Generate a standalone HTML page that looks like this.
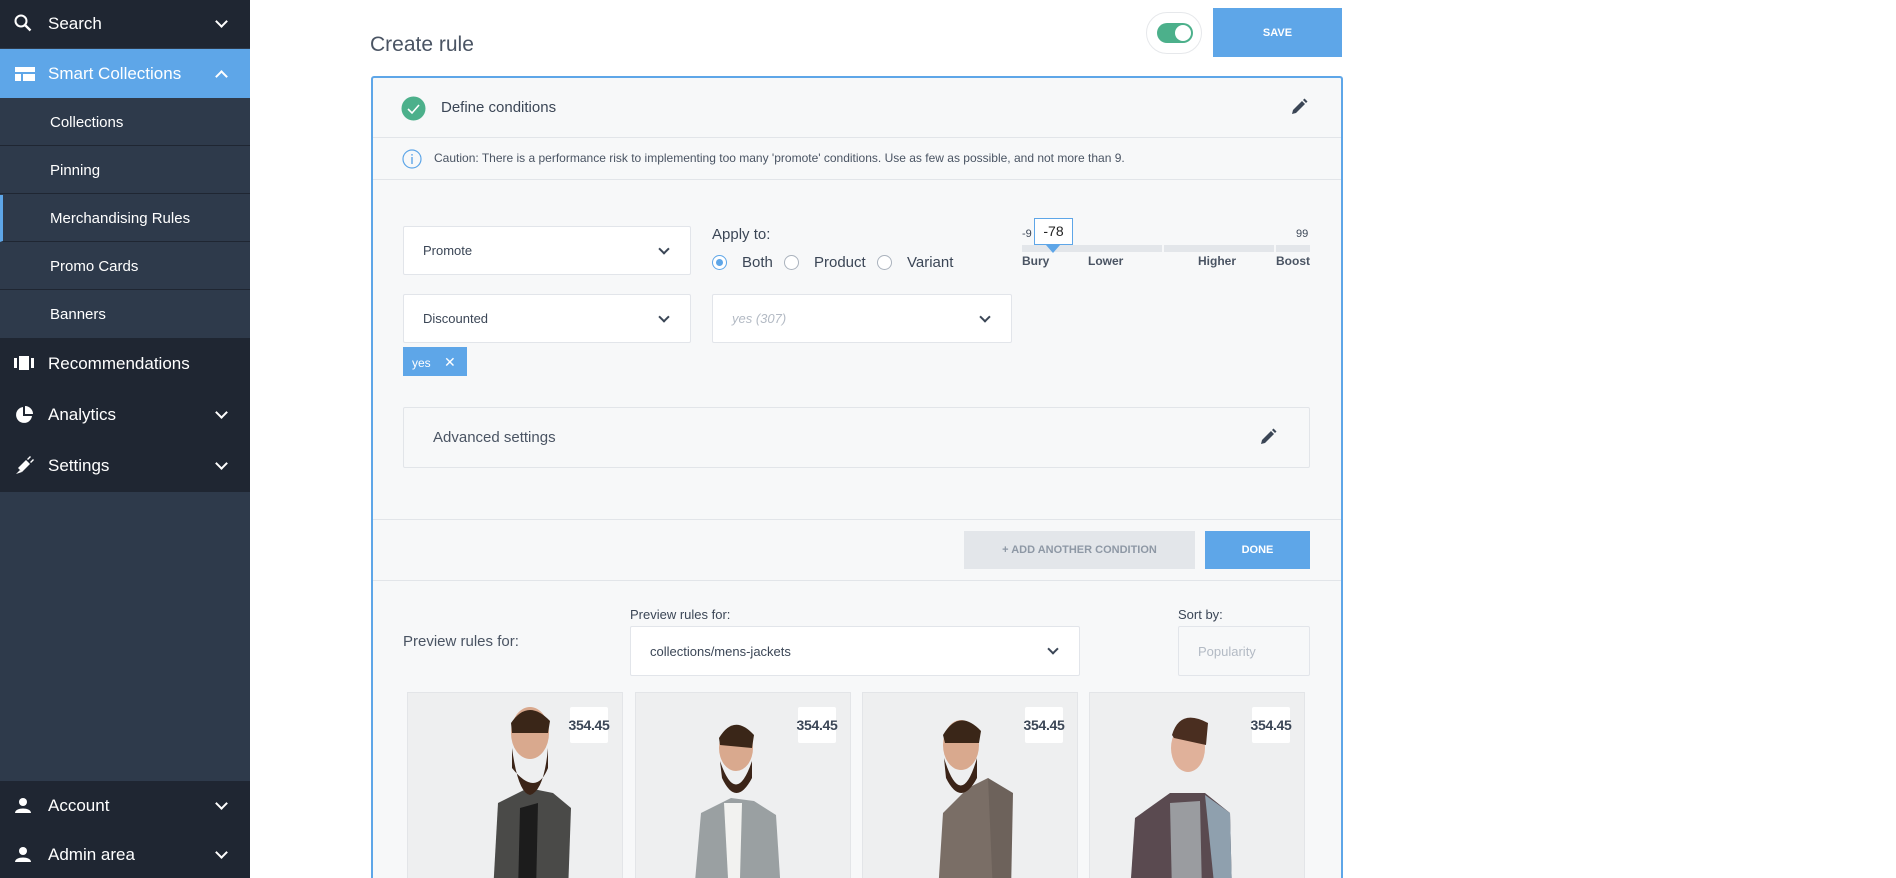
<!DOCTYPE html>
<html style="width:1896px;height:878px;overflow:hidden"><head><meta charset="utf-8">
<style>
*{box-sizing:border-box;margin:0;padding:0}
body{width:1896px;height:878px;overflow:hidden;background:#fff;font-family:"Liberation Sans",sans-serif;position:relative;color:#3b4656}
.abs{position:absolute}
#side{position:absolute;left:0;top:0;width:250px;height:878px;background:#2e3a4b}
.top{position:absolute;left:0;width:250px;background:#1f2632;color:#fff;font-size:17px;display:flex;align-items:center}
.top .t{position:absolute;left:48px}
.chev{position:absolute;right:24px;width:9px;height:9px;border-right:2px solid #fff;border-bottom:2px solid #fff;transform:rotate(45deg);margin-top:-5px}
.chev.up{transform:rotate(-135deg);margin-top:5px}
.sub{position:absolute;left:0;width:250px;height:47px;background:#2e3a4b;border-bottom:1px solid #1f2632;color:#fff;font-size:15px;display:flex;align-items:center;padding-left:50px}
.lbl{font-size:13px;color:#3b4656}
.sel{position:absolute;background:#fff;border:1px solid #e2e5ea;border-radius:2px;font-size:13px;color:#3b4656;display:flex;align-items:center;padding-left:19px}
.sel .c{position:absolute;right:22px;top:50%;width:8px;height:8px;border-right:2px solid #3b4656;border-bottom:2px solid #3b4656;transform:rotate(45deg);margin-top:-6px}
.radio{position:absolute;width:15px;height:15px;border:1px solid #aab2bd;border-radius:50%;background:#fff}
.card{position:absolute;top:692px;width:216px;height:186px;background:#eeeff0;border:1px solid #e3e5e8;border-bottom:none;overflow:hidden}
.price{position:absolute;top:14px;right:14px;width:38px;height:36px;background:#fff;border-radius:2px;font-size:14px;font-weight:bold;color:#3b4656;display:flex;align-items:center;justify-content:center;letter-spacing:-.3px}
</style></head><body>
<div id="side">
 <div class="top" style="top:0;height:48px"><svg class="abs" style="left:14px;top:14px" width="18" height="18" viewBox="0 0 18 18"><circle cx="7" cy="7" r="5.5" fill="none" stroke="#fff" stroke-width="2"/><line x1="11" y1="11" x2="16.5" y2="16.5" stroke="#fff" stroke-width="2.4"/></svg><span class="t">Search</span><span class="chev"></span></div>
 <div class="top" style="top:49px;height:49px;background:#5ea6e8"><svg class="abs" style="left:15px;top:18px" width="20" height="14"><rect x="0" y="0" width="20" height="5" fill="#fff"/><rect x="0" y="7" width="6" height="7" fill="#fff"/><rect x="8" y="7" width="12" height="7" fill="#fff"/></svg><span class="t">Smart Collections</span><span class="chev up"></span></div>
 <div class="sub" style="top:99px">Collections</div>
 <div class="sub" style="top:147px">Pinning</div>
 <div class="sub" style="top:195px;border-left:3px solid #5ea6e8;padding-left:47px">Merchandising Rules</div>
 <div class="sub" style="top:243px">Promo Cards</div>
 <div class="sub" style="top:291px;height:47px;border-bottom:none">Banners</div>
 <div class="top" style="top:338px;height:154px"></div>
 <div class="top" style="top:338px;height:51px"><svg class="abs" style="left:14px;top:18px" width="20" height="14"><rect x="0" y="2" width="3" height="10" fill="#fff"/><rect x="5" y="0" width="10" height="14" fill="#fff"/><rect x="17" y="2" width="3" height="10" fill="#fff"/></svg><span class="t">Recommendations</span></div>
 <div class="top" style="top:389px;height:51px"><svg class="abs" style="left:15px;top:17px" width="18" height="18" viewBox="0 0 18 18"><path d="M8 1A8 8 0 1 0 17 10H8Z" fill="#fff"/><path d="M10 0A8 8 0 0 1 18 8H10Z" fill="#fff"/></svg><span class="t">Analytics</span><span class="chev"></span></div>
 <div class="top" style="top:440px;height:52px"><svg class="abs" style="left:14px;top:16px" width="20" height="20" viewBox="0 0 20 20"><path d="M4 12L12 4L16 8L8 16Z" fill="#fff"/><path d="M2 18L6 14L8 16Z" fill="#fff"/><path d="M13 3L16 0L17 1L14 4Z M16 6L19 3L20 4L17 7Z" fill="#fff"/></svg><span class="t">Settings</span><span class="chev"></span></div>
 <div class="top" style="top:781px;height:50px"><svg class="abs" style="left:15px;top:16px" width="16" height="16"><circle cx="8" cy="5" r="4" fill="#fff"/><path d="M0 16C0 10 16 10 16 16Z" fill="#fff"/></svg><span class="t">Account</span><span class="chev"></span></div>
 <div class="top" style="top:831px;height:47px"><svg class="abs" style="left:15px;top:15px" width="16" height="16"><circle cx="8" cy="5" r="4" fill="#fff"/><path d="M0 16C0 10 16 10 16 16Z" fill="#fff"/></svg><span class="t">Admin area</span><span class="chev"></span></div>
</div>

<div class="abs" style="left:370px;top:33px;font-size:21px;color:#4a5463">Create rule</div>
<div class="abs" style="left:1146px;top:12px;width:56px;height:42px;border:1px solid #e6e8eb;border-radius:21px;background:#fff"></div>
<div class="abs" style="left:1157px;top:23px;width:36px;height:20px;border-radius:10px;background:#4cb08b"></div>
<div class="abs" style="left:1175px;top:25px;width:16px;height:16px;border-radius:50%;background:#fff"></div>
<div class="abs" style="left:1213px;top:8px;width:129px;height:49px;background:#5ea6e8;color:#fff;font-size:11px;font-weight:bold;display:flex;align-items:center;justify-content:center">SAVE</div>

<div class="abs" style="left:371px;top:76px;width:972px;height:802px;border:2px solid #5ea6e8;border-bottom:none;border-radius:3px 3px 0 0;background:#f7f8f9"></div>
<div class="abs" style="left:373px;top:137px;width:968px;height:1px;background:#e2e5e9"></div>
<div class="abs" style="left:373px;top:179px;width:968px;height:1px;background:#e2e5e9"></div>
<svg class="abs" style="left:401px;top:96px" width="25" height="25"><circle cx="12.5" cy="12.5" r="12" fill="#4cb08b"/><path d="M7 13L11 17L18 9" fill="none" stroke="#fff" stroke-width="1.6"/></svg>
<div class="abs" style="left:441px;top:99px;font-size:15px;color:#3b4656">Define conditions</div>
<svg class="abs" style="left:1290px;top:98px" width="18" height="18" viewBox="0 0 18 18"><path d="M2 16L3 12L12 3L15 6L6 15Z" fill="#3b4656"/><path d="M13 2L14.5 0.5L17.5 3.5L16 5Z" fill="#3b4656"/></svg>
<svg class="abs" style="left:402px;top:149px" width="20" height="20"><circle cx="10" cy="10" r="9" fill="none" stroke="#5ea6e8" stroke-width="1.2"/><rect x="9.3" y="8" width="1.4" height="7" fill="#5ea6e8"/><rect x="9.3" y="5" width="1.4" height="1.6" fill="#5ea6e8"/></svg>
<div class="abs" style="left:434px;top:151px;font-size:12px;color:#4a5463">Caution: There is a performance risk to implementing too many 'promote' conditions. Use as few as possible, and not more than 9.</div>

<div class="sel" style="left:403px;top:226px;width:288px;height:49px">Promote<span class="c"></span></div>
<div class="sel" style="left:403px;top:294px;width:288px;height:49px">Discounted<span class="c"></span></div>
<div class="sel" style="left:712px;top:294px;width:300px;height:49px;color:#b3bac4;font-style:italic">yes (307)<span class="c"></span></div>
<div class="abs" style="left:403px;top:347px;width:64px;height:29px;background:#5ea6e8;color:#fff;font-size:12px;padding:7px 0 0 9px">yes <span style="margin-left:10px;font-size:14px">✕</span></div>
<div class="abs lbl" style="left:712px;top:226px;font-size:15px">Apply to:</div>
<div class="radio" style="left:712px;top:255px;border-color:#5ea6e8"><div style="position:absolute;left:3px;top:3px;width:7px;height:7px;border-radius:50%;background:#5ea6e8"></div></div>
<div class="abs" style="left:742px;top:254px;font-size:15px">Both</div>
<div class="radio" style="left:784px;top:255px"></div>
<div class="abs" style="left:814px;top:254px;font-size:15px">Product</div>
<div class="radio" style="left:877px;top:255px"></div>
<div class="abs" style="left:907px;top:254px;font-size:15px">Variant</div>

<div class="abs" style="left:1022px;top:228px;font-size:11px">-9</div>
<div class="abs" style="left:1296px;top:228px;font-size:11px">99</div>
<div class="abs" style="left:1022px;top:245px;width:140px;height:7px;background:#e3e6ea"></div>
<div class="abs" style="left:1164px;top:245px;width:110px;height:7px;background:#e3e6ea"></div>
<div class="abs" style="left:1276px;top:245px;width:34px;height:7px;background:#e3e6ea"></div>
<div class="abs" style="left:1034px;top:218px;width:39px;height:27px;background:#fff;border:1px solid #5ea6e8;font-size:14px;color:#222;text-align:center;line-height:25px">-78</div>
<div class="abs" style="left:1046px;top:245px;width:0;height:0;border-left:7px solid transparent;border-right:7px solid transparent;border-top:8px solid #5ea6e8"></div>
<div class="abs" style="left:1022px;top:254px;font-size:12px;font-weight:bold;color:#4a5463">Bury</div>
<div class="abs" style="left:1088px;top:254px;font-size:12px;font-weight:bold;color:#4a5463">Lower</div>
<div class="abs" style="left:1198px;top:254px;font-size:12px;font-weight:bold;color:#4a5463">Higher</div>
<div class="abs" style="left:1276px;top:254px;font-size:12px;font-weight:bold;color:#4a5463">Boost</div>

<div class="abs" style="left:403px;top:407px;width:907px;height:61px;border:1px solid #e2e5e9;border-radius:2px"></div>
<div class="abs" style="left:433px;top:429px;font-size:15px;color:#4a5463">Advanced settings</div>
<svg class="abs" style="left:1259px;top:428px" width="18" height="18" viewBox="0 0 18 18"><path d="M2 16L3 12L12 3L15 6L6 15Z" fill="#3b4656"/><path d="M13 2L14.5 0.5L17.5 3.5L16 5Z" fill="#3b4656"/></svg>

<div class="abs" style="left:373px;top:519px;width:968px;height:1px;background:#e2e5e9"></div>
<div class="abs" style="left:964px;top:531px;width:231px;height:38px;background:#e3e6ea;color:#8e98a5;font-size:11px;font-weight:bold;display:flex;align-items:center;justify-content:center">+ ADD ANOTHER CONDITION</div>
<div class="abs" style="left:1205px;top:531px;width:105px;height:38px;background:#5ea6e8;color:#fff;font-size:11px;font-weight:bold;display:flex;align-items:center;justify-content:center">DONE</div>
<div class="abs" style="left:373px;top:580px;width:968px;height:1px;background:#e2e5e9"></div>

<div class="abs" style="left:403px;top:633px;font-size:15px;color:#4a5463">Preview rules for:</div>
<div class="abs lbl" style="left:630px;top:607px">Preview rules for:</div>
<div class="sel" style="left:630px;top:626px;width:450px;height:50px">collections/mens-jackets<span class="c"></span></div>
<div class="abs lbl" style="left:1178px;top:607px">Sort by:</div>
<div class="sel" style="left:1178px;top:626px;width:132px;height:50px;color:#b3bac4;background:#f7f8f9">Popularity</div>

<div class="card" style="left:407px"><svg width="216" height="186"><path d="M85 200L90 110L120 95L145 100L163 115L160 200Z" fill="#4a4a48"/><path d="M112 115L130 110L128 200L110 200Z" fill="#1c1c1c"/><ellipse cx="122" cy="40" rx="19" ry="26" fill="#d9a98e"/><path d="M103 30Q120 5 142 28L140 40L104 40Z" fill="#3a2618"/><path d="M104 55Q110 100 122 102Q136 98 140 55L140 75Q128 105 104 75Z" fill="#3b2418"/></svg><div class="price">354.45</div></div>
<div class="card" style="left:635px"><svg width="216" height="186"><path d="M58 200L65 120L95 105L118 108L140 122L145 200Z" fill="#9aa0a2"/><path d="M88 110L106 110L104 185L92 185Z" fill="#f2f2f0"/><ellipse cx="100" cy="55" rx="17" ry="23" fill="#d9a98e"/><path d="M83 45Q98 20 118 42L116 55L84 52Z" fill="#3a2618"/><path d="M84 68Q100 115 116 68L116 85Q100 115 86 85Z" fill="#3b2418"/></svg><div class="price">354.45</div></div>
<div class="card" style="left:862px"><svg width="216" height="186"><path d="M75 200L80 120L105 95L125 85L145 110L145 200Z" fill="#7a6e66"/><path d="M125 85L150 100L148 200L130 200Z" fill="#6d625b"/><ellipse cx="98" cy="52" rx="18" ry="25" fill="#d9a98e"/><path d="M80 42Q96 15 118 38L116 50L82 50Z" fill="#3a2618"/><path d="M81 65Q98 120 114 65L114 85Q98 115 83 85Z" fill="#3b2418"/></svg><div class="price">354.45</div></div>
<div class="card" style="left:1089px"><svg width="216" height="186"><path d="M40 200L45 125L80 100L115 100L140 120L142 200Z" fill="#5a4a50"/><path d="M80 110L110 108L112 200L82 200Z" fill="#9a9ca0"/><path d="M115 102L140 120L142 200L125 200Z" fill="#8fa0ae"/><ellipse cx="98" cy="55" rx="17" ry="24" fill="#e0b19a"/><path d="M82 42Q90 15 118 30L116 52L84 45Z" fill="#4a2e20"/></svg><div class="price">354.45</div></div>
</body></html>
